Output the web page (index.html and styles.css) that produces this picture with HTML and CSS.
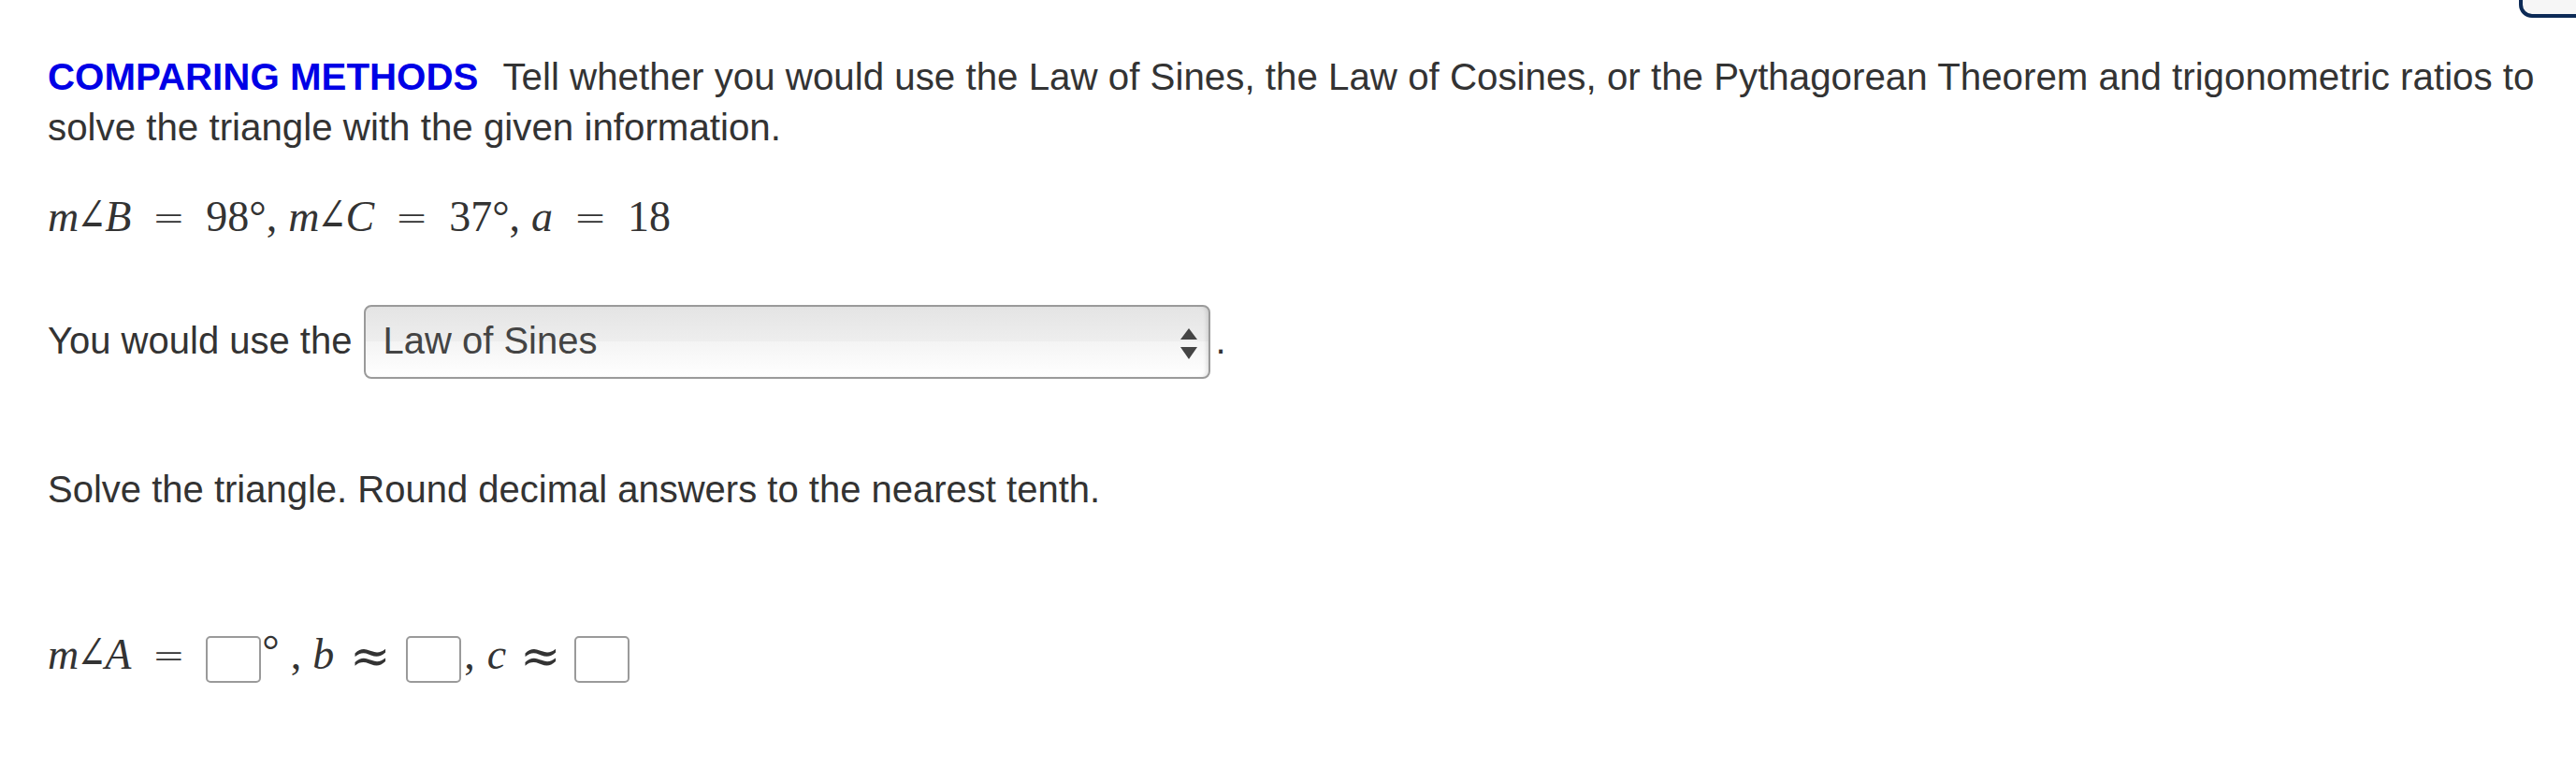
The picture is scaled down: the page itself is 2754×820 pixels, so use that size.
FILE: index.html
```html
<!DOCTYPE html>
<html>
<head>
<meta charset="utf-8">
<link rel="stylesheet" href="styles.css">
</head>
<body>
<div class="corner-btn"></div>
<div class="problem">
  <p class="intro"><span class="tag">COMPARING METHODS</span><span class="gap"></span>Tell whether you would use the Law of Sines, the Law of Cosines, or the Pythagorean Theorem and trigonometric ratios to solve the triangle with the given information.</p>

  <div class="math given"><i>m</i><span class="ang">∠</span><i>B</i><span class="rel">=</span>98°<span class="punct">,</span><i>m</i><span class="ang">∠</span><i>C</i><span class="rel">=</span>37°<span class="punct">,</span><i>a</i><span class="rel">=</span>18</div>

  <div class="choice">You would use the<div class="select"><span class="select-text">Law of Sines</span><span class="arrows"><span class="up"></span><span class="down"></span></span></div>.</div>

  <p class="instr">Solve the triangle. Round decimal answers to the nearest tenth.</p>

  <div class="math answers"><i>m</i><span class="ang">∠</span><i>A</i><span class="rel">=</span><span class="box"></span><span class="deg">°</span><span class="comma1">,</span><i>b</i><span class="rel approx">≈</span><span class="box"></span><span class="comma2">,</span><i>c</i><span class="rel approx last">≈</span><span class="box"></span></div>
</div>
</body>
</html>
```

FILE: styles.css
```css
html, body {
  margin: 0;
  padding: 0;
  background: #ffffff;
}

body {
  font-family: "Liberation Sans", Arial, Helvetica, sans-serif;
  font-size: 40px;
  line-height: 54px;
  color: #333333;
  position: relative;
  width: 2754px;
  height: 820px;
  overflow: hidden;
}

.corner-btn {
  position: absolute;
  left: 2693px;
  top: -40px;
  width: 120px;
  height: 51px;
  border: 4px solid #0c2a56;
  border-radius: 14px;
  background: #f6f6f6;
}

.problem {
  padding: 56px 0 0 51px;
}

.intro {
  margin: 0;
  width: 2690px;
  font-size: 40.3px;
}

.tag {
  color: #0000e6;
  font-weight: bold;
}

.gap {
  display: inline-block;
  width: 26px;
}

.math {
  font-family: "Liberation Serif", "Times New Roman", "DejaVu Serif", serif;
  font-size: 46px;
  line-height: 60px;
  color: #333333;
  white-space: nowrap;
}

.math i {
  font-style: italic;
}

.ang {
  display: inline-flex;
  justify-content: center;
  width: 28px;
  font-family: "DejaVu Sans", "DejaVu Serif", sans-serif;
  font-weight: 200;
  font-size: 50px;
  line-height: 40px;
  transform: scaleX(0.75);
}

.rel {
  display: inline-flex;
  justify-content: center;
  width: 80px;
  font-family: "DejaVu Sans", "DejaVu Serif", sans-serif;
  font-weight: 200;
  font-size: 42px;
  line-height: 40px;
}

.rel.approx {
  width: 77px;
  font-size: 52px;
  vertical-align: -4px;
}

.rel.approx.last {
  width: 73px;
}

.punct {
  margin-right: 12px;
}

.given {
  margin-top: 38px;
}

.choice {
  margin-top: 64px;
  line-height: 54px;
}

.select {
  display: inline-block;
  box-sizing: border-box;
  width: 905px;
  height: 79px;
  margin-left: 13px;
  margin-right: 5px;
  padding: 9px 0 12px 18px;
  border: 2px solid #9a9a9a;
  border-radius: 8px;
  background: linear-gradient(#e4e4e4, #eeeeee 50%, #f4f4f4 50%, #ffffff);
  box-shadow: inset -4px 0 4px -2px rgba(0, 0, 0, 0.12);
  color: #444444;
  position: relative;
}

.arrows {
  position: absolute;
  right: 12px;
  top: 23px;
  width: 18px;
  height: 33px;
}

.up, .down {
  position: absolute;
  left: 0;
  width: 0;
  height: 0;
  border-left: 9px solid transparent;
  border-right: 9px solid transparent;
}

.up {
  top: 0;
  border-bottom: 12px solid #444444;
}

.down {
  bottom: 0;
  border-top: 13px solid #444444;
}

.instr {
  margin: 91px 0 0 0;
}

.answers {
  margin-top: 116px;
}

.box {
  display: inline-block;
  box-sizing: border-box;
  width: 59px;
  height: 50px;
  border: 2px solid #9a9a9a;
  border-radius: 5px;
  vertical-align: -15px;
  background: #ffffff;
}

.deg {
  display: inline-block;
  vertical-align: 4px;
  margin: 0 0 0 1px;
}

.comma1 {
  margin-left: 12px;
  margin-right: 12px;
}

.comma2 {
  margin-left: 3px;
  margin-right: 13px;
}
```
